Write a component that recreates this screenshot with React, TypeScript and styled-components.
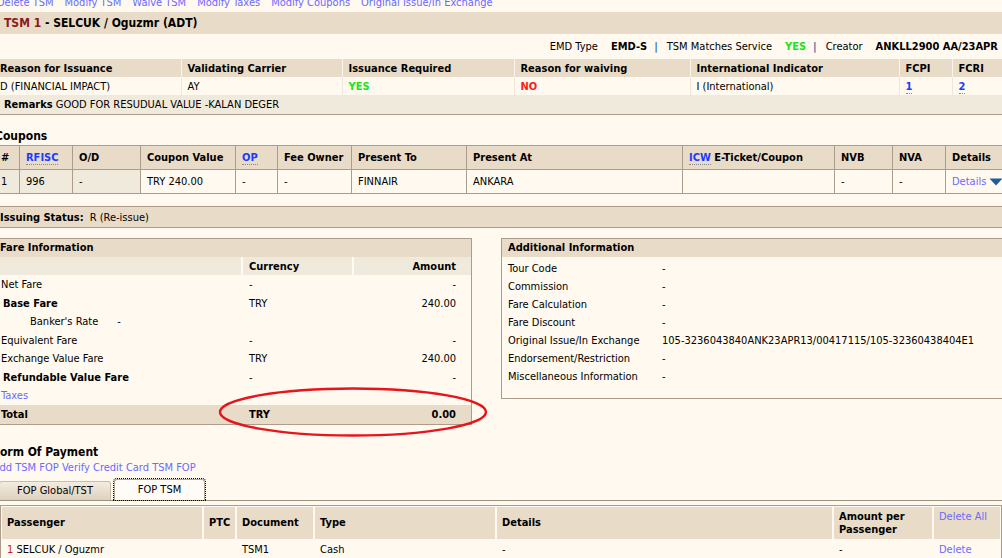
import React from "react";
import styled, { createGlobalStyle } from "styled-components";

const GlobalStyle = createGlobalStyle`
  html, body {
    margin: 0;
    padding: 0;
    background: #fff9ef;
    overflow: hidden;
  }
  body {
    font-family: "DejaVu Sans Condensed", "DejaVu Sans", sans-serif;
    font-size: 11px;
    color: #000;
  }
`;

const TAN = "#e8dbc8";
const SHADE = "#f0eadd";
const LINE = "#ab9d89";
const LINK = "#6a6aff";
const STRONG_LINK = "#1a3cff";

interface Column {
  w: number;
}

const topColumns: Column[] = [{ w: 181 }, { w: 161 }, { w: 172 }, { w: 176 }, { w: 209 }, { w: 53 }, { w: 50 }];
const couponColumns: Column[] = [
  { w: 20 }, { w: 53 }, { w: 68 }, { w: 95 }, { w: 42 }, { w: 74 },
  { w: 115 }, { w: 216 }, { w: 152 }, { w: 58 }, { w: 53 }, { w: 57 },
];
const fopColumns: Column[] = [{ w: 201 }, { w: 33 }, { w: 78 }, { w: 182 }, { w: 337 }, { w: 100 }, { w: 67 }];

const fareRows = [
  { label: "Net Fare", currency: "-", amount: "-" },
  { label: "Base Fare", currency: "TRY", amount: "240.00", bold: true },
  { label: "Banker's Rate", note: "-", indent: true },
  { label: "Equivalent Fare", currency: "-", amount: "-" },
  { label: "Exchange Value Fare", currency: "TRY", amount: "240.00" },
  { label: "Refundable Value Fare", currency: "-", amount: "-", bold: true },
  { label: "Taxes", currency: "-", amount: "-", link: true },
];

const additionalRows = [
  ["Tour Code", "-"],
  ["Commission", "-"],
  ["Fare Calculation", "-"],
  ["Fare Discount", "-"],
  ["Original Issue/In Exchange", "105-3236043840ANK23APR13/00417115/105-32360438404E1"],
  ["Endorsement/Restriction", "-"],
  ["Miscellaneous Information", "-"],
];

const ColGroup = ({ columns }: { columns: Column[] }) => (
  <colgroup>
    {columns.map((c, i) => (
      <Col key={i} $w={c.w} />
    ))}
  </colgroup>
);

const DetailsArrow = () => (
  <svg width="14" height="8" viewBox="0 0 14 8">
    <path d="M0.5 0.5 L13.5 0.5 L7 7.5 Z" fill="#1f5c99" />
  </svg>
);

const App = () => {
  return (
    <Page>
      <GlobalStyle />
      <Content>
        <LinksBar>
          {["Delete TSM", "Modify TSM", "Waive TSM", "Modify Taxes", "Modify Coupons", "Original Issue/In Exchange"].map(
            (l) => (
              <Link key={l}>{l}</Link>
            )
          )}
        </LinksBar>

        <TsmBar>
          <TsmId>TSM 1</TsmId> - SELCUK / Oguzmr (ADT)
        </TsmBar>

        <InfoLine>
          <span>EMD Type</span>
          <InfoValue>EMD-S</InfoValue>
          <Pipe>|</Pipe>
          <span>TSM Matches Service</span>
          <InfoValue $color="#19e619">YES</InfoValue>
          <Pipe>|</Pipe>
          <span>Creator</span>
          <InfoValue>ANKLL2900 AA/23APR</InfoValue>
        </InfoLine>

        <TopTable>
          <ColGroup columns={topColumns} />
          <thead>
            <tr>
              <TopHead $first>Reason for Issuance</TopHead>
              <TopHead>Validating Carrier</TopHead>
              <TopHead>Issuance Required</TopHead>
              <TopHead>Reason for waiving</TopHead>
              <TopHead>International Indicator</TopHead>
              <TopHead>FCPI</TopHead>
              <TopHead>FCRI</TopHead>
            </tr>
          </thead>
          <tbody>
            <tr>
              <TopCell $first>D (FINANCIAL IMPACT)</TopCell>
              <TopCell>AY</TopCell>
              <TopCell>
                <Flag $color="#19e619">YES</Flag>
              </TopCell>
              <TopCell>
                <Flag $color="#ff1a1a">NO</Flag>
              </TopCell>
              <TopCell>I (International)</TopCell>
              <TopCell>
                <Abbr>1</Abbr>
              </TopCell>
              <TopCell>
                <Abbr>2</Abbr>
              </TopCell>
            </tr>
            <tr>
              <RemarksCell colSpan={7}>
                <b>Remarks</b> GOOD FOR RESUDUAL VALUE -KALAN DEGER
              </RemarksCell>
            </tr>
          </tbody>
        </TopTable>

        <SectionTitle $offset={-5} $top={13}>
          Coupons
        </SectionTitle>

        <CouponTable>
          <ColGroup columns={couponColumns} />
          <thead>
            <tr>
              <CouponHead $first>#</CouponHead>
              <CouponHead>
                <Abbr>RFISC</Abbr>
              </CouponHead>
              <CouponHead>O/D</CouponHead>
              <CouponHead>Coupon Value</CouponHead>
              <CouponHead>
                <Abbr>OP</Abbr>
              </CouponHead>
              <CouponHead>Fee Owner</CouponHead>
              <CouponHead>Present To</CouponHead>
              <CouponHead>Present At</CouponHead>
              <CouponHead>
                <Abbr>ICW</Abbr> E-Ticket/Coupon
              </CouponHead>
              <CouponHead>NVB</CouponHead>
              <CouponHead>NVA</CouponHead>
              <CouponHead>Details</CouponHead>
            </tr>
          </thead>
          <tbody>
            <tr>
              <CouponCell $first $shade>
                1
              </CouponCell>
              <CouponCell $shade>996</CouponCell>
              <CouponCell $shade>-</CouponCell>
              <CouponCell>TRY 240.00</CouponCell>
              <CouponCell>-</CouponCell>
              <CouponCell>-</CouponCell>
              <CouponCell>FINNAIR</CouponCell>
              <CouponCell>ANKARA</CouponCell>
              <CouponCell></CouponCell>
              <CouponCell>-</CouponCell>
              <CouponCell>-</CouponCell>
              <CouponCell>
                <DetailsLink>
                  <Link>Details</Link>
                  <DetailsArrow />
                </DetailsLink>
              </CouponCell>
            </tr>
          </tbody>
        </CouponTable>

        <StatusBar>
          <b>Issuing Status:</b>
          <StatusValue>R (Re-issue)</StatusValue>
        </StatusBar>

        <InfoRow>
          <FareBox>
            <BoxHeader $pad={0}>Fare Information</BoxHeader>
            <FareGrid>
              <FareSubHead />
              <FareSubHead $sep>Currency</FareSubHead>
              <FareSubHead $sep $right>
                Amount
              </FareSubHead>
              {fareRows.map((r) => (
                <React.Fragment key={r.label}>
                  <FareLabel $bold={r.bold} $indent={r.indent} $link={r.link}>
                    {r.label}
                    {r.note && <Note>{r.note}</Note>}
                  </FareLabel>
                  <FareValue>{r.currency}</FareValue>
                  <FareValue $right>{r.amount}</FareValue>
                </React.Fragment>
              ))}
              <FareTotal>Total</FareTotal>
              <FareTotal $pad>TRY</FareTotal>
              <FareTotal $right>0.00</FareTotal>
            </FareGrid>
          </FareBox>

          <AdditionalBox>
            <BoxHeader $pad={6}>Additional Information</BoxHeader>
            <AdditionalList>
              {additionalRows.map(([label, value]) => (
                <React.Fragment key={label}>
                  <span>{label}</span>
                  <span>{value}</span>
                </React.Fragment>
              ))}
            </AdditionalList>
          </AdditionalBox>
        </InfoRow>

        <SectionTitle $offset={-7} $top={19}>
          Form Of Payment
        </SectionTitle>
        <FopLinks>
          <Link>Add TSM FOP</Link> <Link>Verify Credit Card TSM FOP</Link>
        </FopLinks>

        <Tabs>
          <Tab>FOP Global/TST</Tab>
          <Tab $active>FOP TSM</Tab>
        </Tabs>

        <FopBox>
          <FopTable>
            <ColGroup columns={fopColumns} />
            <thead>
              <tr>
                <FopHead>Passenger</FopHead>
                <FopHead>PTC</FopHead>
                <FopHead>Document</FopHead>
                <FopHead>Type</FopHead>
                <FopHead>Details</FopHead>
                <FopHead>
                  Amount per
                  <br />
                  Passenger
                </FopHead>
                <FopHead $top>
                  <Link>Delete All</Link>
                </FopHead>
              </tr>
            </thead>
            <tbody>
              <tr>
                <FopCell>
                  <PaxNo>1</PaxNo> SELCUK / Oguzmr
                </FopCell>
                <FopCell></FopCell>
                <FopCell>TSM1</FopCell>
                <FopCell>Cash</FopCell>
                <FopCell>-</FopCell>
                <FopCell>-</FopCell>
                <FopCell>
                  <Link>Delete</Link>
                </FopCell>
              </tr>
            </tbody>
          </FopTable>
        </FopBox>
      </Content>

      <Highlight width="272" height="52" viewBox="0 0 272 52">
        <ellipse cx="136" cy="26" rx="133" ry="23.5" fill="none" stroke="#e8141c" strokeWidth="2.4" />
      </Highlight>
    </Page>
  );
};

const Page = styled.div`
  position: relative;
  width: 1002px;
  height: 558px;
  overflow: hidden;
`;

const Content = styled.div`
  margin-top: -6px;
  width: 1002px;
`;

const Col = styled.col<{ $w: number }>`
  width: ${(props) => props.$w}px;
`;

const Link = styled.span`
  color: ${LINK};
  font-weight: normal;
  cursor: pointer;
`;

const LinksBar = styled.div`
  display: flex;
  gap: 11px;
  height: 18px;
  line-height: 18px;
  margin-left: -3px;
  white-space: nowrap;
`;

const TsmBar = styled.div`
  height: 22px;
  line-height: 22px;
  padding-left: 4px;
  background: ${TAN};
  font-size: 12px;
  font-weight: bold;
`;

const TsmId = styled.span`
  color: #8b1a1a;
`;

const InfoLine = styled.div`
  display: flex;
  justify-content: flex-end;
  align-items: center;
  height: 25px;
  padding-right: 4px;
  white-space: nowrap;
`;

const InfoValue = styled.span<{ $color?: string }>`
  margin: 0 7px 0 13px;
  font-weight: bold;
  color: ${(props) => props.$color || "#000"};

  &:last-child {
    margin-right: 0;
  }
`;

const Pipe = styled.span`
  margin-right: 9px;
  color: #3a6ea5;
  font-weight: bold;
`;

const TopTable = styled.table`
  width: 1002px;
  table-layout: fixed;
  border-collapse: collapse;
  border-bottom: 1px solid ${LINE};
`;

const TopHead = styled.th<{ $first?: boolean }>`
  height: 18px;
  padding: 0 0 0 ${(props) => (props.$first ? 0 : 6)}px;
  background: ${TAN};
  border-left: ${(props) => (props.$first ? "none" : "1px solid #fbf5ea")};
  font-weight: bold;
  text-align: left;
  white-space: nowrap;
  overflow: hidden;
`;

const TopCell = styled.td<{ $first?: boolean }>`
  height: 18px;
  padding: 0 0 0 ${(props) => (props.$first ? 0 : 6)}px;
  border-left: ${(props) => (props.$first ? "none" : "1px solid #efe8da")};
  white-space: nowrap;
`;

const Flag = styled.span<{ $color: string }>`
  color: ${(props) => props.$color};
  font-weight: bold;
`;

const Abbr = styled.span`
  color: ${STRONG_LINK};
  font-weight: bold;
  border-bottom: 1px dotted #888;
`;

const RemarksCell = styled.td`
  height: 19px;
  padding: 0 0 0 4px;
  background: ${SHADE};
`;

const SectionTitle = styled.div<{ $offset: number; $top: number }>`
  height: 16px;
  line-height: 16px;
  margin: ${(props) => props.$top}px 0 0 ${(props) => props.$offset}px;
  font-size: 12px;
  font-weight: bold;
`;

const CouponTable = styled.table`
  width: 1003px;
  margin: 1px 0 0 -1px;
  table-layout: fixed;
  border-collapse: collapse;
`;

const CouponHead = styled.th<{ $first?: boolean }>`
  height: 23px;
  padding: 0 0 0 ${(props) => (props.$first ? 1 : 6)}px;
  background: ${TAN};
  border: 1px solid ${LINE};
  font-weight: bold;
  text-align: left;
  white-space: nowrap;
`;

const CouponCell = styled.td<{ $first?: boolean; $shade?: boolean }>`
  height: 23px;
  padding: 0 0 0 ${(props) => (props.$first ? 1 : 6)}px;
  background: ${(props) => (props.$shade ? SHADE : "transparent")};
  border: 1px solid ${LINE};
  white-space: nowrap;
`;

const DetailsLink = styled.span`
  display: inline-flex;
  align-items: center;
  gap: 3px;
`;

const StatusBar = styled.div`
  display: flex;
  align-items: center;
  height: 20px;
  margin-top: 12px;
  background: ${TAN};
  border-top: 1px solid ${LINE};
  border-bottom: 1px solid ${LINE};
`;

const StatusValue = styled.span`
  margin-left: 6px;
`;

const InfoRow = styled.div`
  display: flex;
  align-items: flex-start;
  margin-top: 10px;
`;

const FareBox = styled.div`
  width: 471px;
  margin-left: -1px;
  border: 1px solid ${LINE};
`;

const BoxHeader = styled.div<{ $pad: number }>`
  height: 18px;
  line-height: 18px;
  padding-left: ${(props) => props.$pad}px;
  background: ${TAN};
  font-weight: bold;
`;

const FareGrid = styled.div`
  display: grid;
  grid-template-columns: 241px 111px 1fr;
  grid-auto-rows: 18.5px;
`;

const FareSubHead = styled.div<{ $sep?: boolean; $right?: boolean }>`
  height: 18px;
  line-height: 19px;
  padding: 0 ${(props) => (props.$right ? 15 : 0)}px 0 ${(props) => (props.$sep ? 6 : 0)}px;
  background: ${SHADE};
  border-left: ${(props) => (props.$sep ? "2px solid #fffaf2" : "none")};
  text-align: ${(props) => (props.$right ? "right" : "left")};
  font-weight: bold;
`;

const FareLabel = styled.div<{ $bold?: boolean; $indent?: boolean; $link?: boolean }>`
  display: flex;
  align-items: center;
  padding-left: ${(props) => (props.$indent ? 30 : props.$bold ? 3 : 1)}px;
  font-weight: ${(props) => (props.$bold ? "bold" : "normal")};
  color: ${(props) => (props.$link ? LINK : "#000")};
  white-space: nowrap;
`;

const Note = styled.span`
  margin-left: 19px;
`;

const FareValue = styled.div<{ $right?: boolean }>`
  display: flex;
  align-items: center;
  justify-content: ${(props) => (props.$right ? "flex-end" : "flex-start")};
  padding: 0 ${(props) => (props.$right ? 15 : 0)}px 0 ${(props) => (props.$right ? 0 : 8)}px;
`;

const FareTotal = styled.div<{ $right?: boolean; $pad?: boolean }>`
  display: flex;
  align-items: center;
  justify-content: ${(props) => (props.$right ? "flex-end" : "flex-start")};
  padding: 0 ${(props) => (props.$right ? 15 : 0)}px 0 ${(props) => (props.$pad ? 8 : 1)}px;
  background: ${TAN};
  font-weight: bold;
`;

const AdditionalBox = styled.div`
  flex: 1;
  margin-left: 29px;
  margin-right: -12px;
  padding-bottom: 13px;
  border: 1px solid ${LINE};
`;

const AdditionalList = styled.div`
  display: grid;
  grid-template-columns: 154px 1fr;
  grid-auto-rows: 18px;
  align-items: center;
  padding: 2px 0 0 6px;
  white-space: nowrap;
`;

const FopLinks = styled.div`
  height: 16px;
  line-height: 16px;
  margin-left: -7px;
  color: ${LINK};
  white-space: nowrap;
`;

const Tabs = styled.div`
  display: flex;
  align-items: flex-end;
  gap: 3px;
  height: 21px;
  margin-top: 3px;
  border-bottom: 1px solid #9e917c;
`;

const Tab = styled.div<{ $active?: boolean }>`
  box-sizing: border-box;
  width: ${(props) => (props.$active ? 91 : 112)}px;
  height: ${(props) => (props.$active ? 21 : 19)}px;
  margin-left: ${(props) => (props.$active ? 0 : -1)}px;
  display: flex;
  align-items: center;
  justify-content: center;
  background: ${(props) => (props.$active ? "#fffbf7" : "linear-gradient(#f3ecdf, #ddd2bf)")};
  border: 1px solid ${(props) => (props.$active ? "#b4a892" : "#c9bda9")};
  border-bottom: none;
  border-radius: 3px 3px 0 0;
  outline: ${(props) => (props.$active ? "1px dotted #000" : "none")};
  outline-offset: 0;
`;

const FopBox = styled.div`
  margin-top: 4px;
  padding: 1px;
  border: 1px solid ${LINE};
`;

const FopTable = styled.table`
  width: 100%;
  table-layout: fixed;
  border-collapse: collapse;
`;

const FopHead = styled.th<{ $top?: boolean }>`
  height: ${(props) => (props.$top ? 29 : 32)}px;
  padding: ${(props) => (props.$top ? "3px" : "0")} 0 0 5px;
  background: ${TAN};
  border-left: 2px solid #fff9ef;
  font-weight: bold;
  text-align: left;
  vertical-align: ${(props) => (props.$top ? "top" : "middle")};
  line-height: 13px;

  &:first-child {
    border-left: none;
  }
`;

const FopCell = styled.td`
  height: 22px;
  padding: 0 0 0 5px;
  border-left: 2px solid #fff9ef;

  &:first-child {
    border-left: none;
  }
`;

const PaxNo = styled.span`
  color: #c81a1a;
`;

const Highlight = styled.svg`
  position: absolute;
  left: 217px;
  top: 386px;
`;

export default App;
